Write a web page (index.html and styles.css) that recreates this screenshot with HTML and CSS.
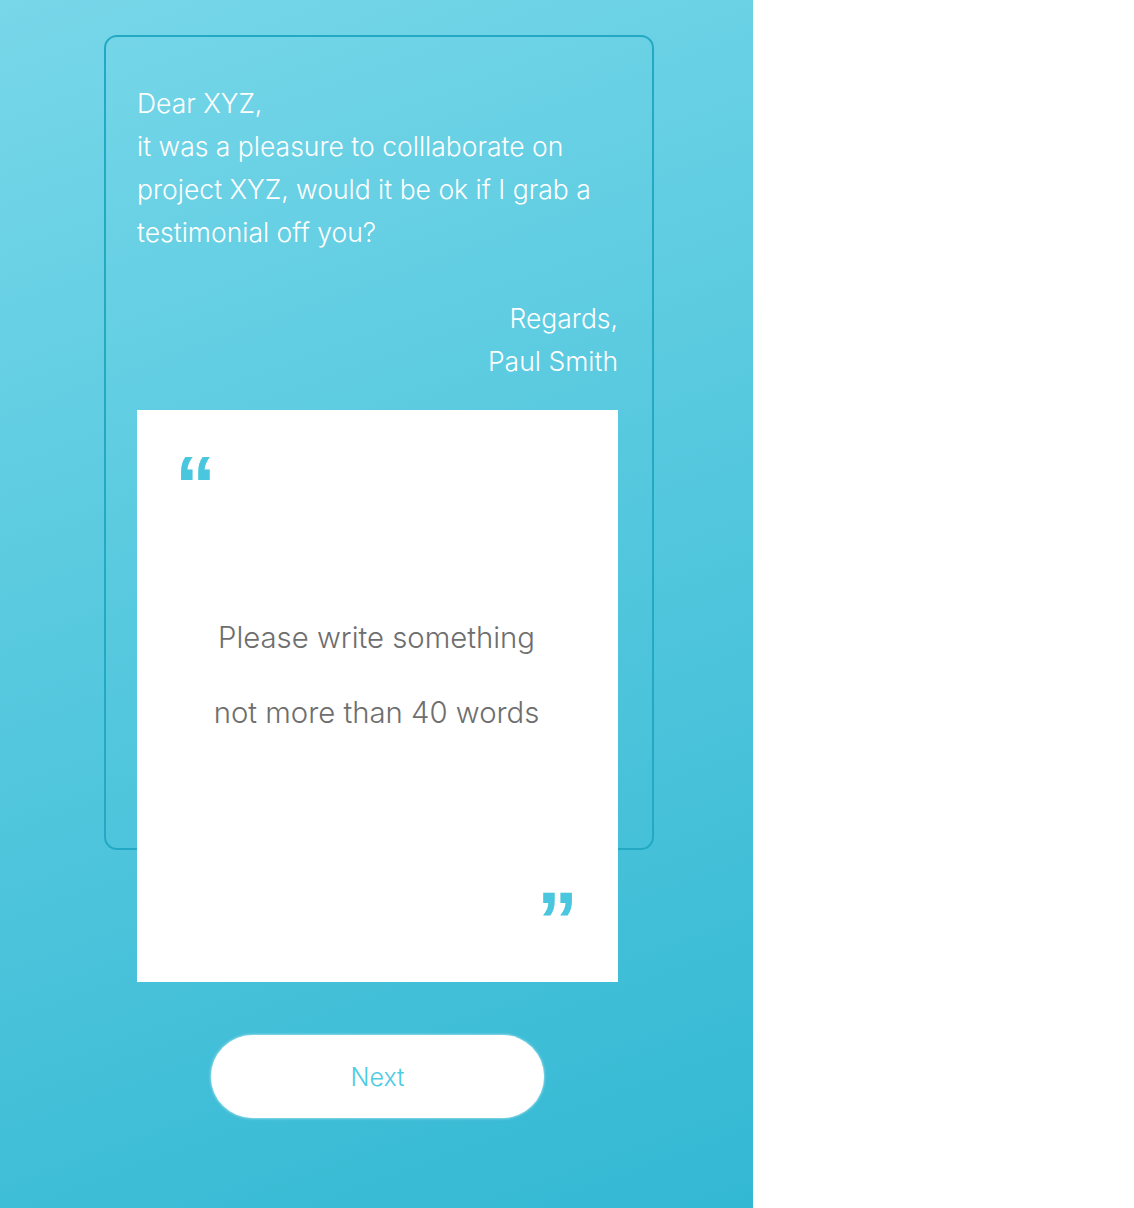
FILE: index.html
```html
<!DOCTYPE html>
<html lang="en">
<head>
<meta charset="utf-8">
<title>Testimonial request</title>
<link rel="stylesheet" href="styles.css">
</head>
<body>
<div class="page">
  <section class="panel">
    <div class="card">
      <div class="letter">
        <p class="greeting">Dear XYZ,<br>it was a pleasure to colllaborate on project XYZ, would it be ok if I grab a testimonial off you?</p>
        <p class="sign">Regards,<br>Paul Smith</p>
      </div>
      <div class="quote-box">
        <div class="q q-open">&ldquo;</div>
        <div class="prompt">
          <p>Please write something</p>
          <p>not more than 40 words</p>
        </div>
        <div class="q q-close">&rdquo;</div>
      </div>
    </div>
    <div class="actions">
      <button class="next" type="button">Next</button>
    </div>
  </section>
  <div class="blank"></div>
</div>
</body>
</html>
```

FILE: styles.css
```css
* { box-sizing: border-box; }
html, body { margin: 0; padding: 0; background: #fff; }
body { font-family: Inter, "Liberation Sans", sans-serif; }

.page { display: flex; width: 1134px; height: 1208px; }

.panel {
  width: 753px;
  height: 1208px;
  background: linear-gradient(160deg, #78d7e9 0%, #57c9df 45%, #33b8d3 100%);
  padding: 35px 0 0 104px;
  display: flex;
  flex-direction: column;
}

.card {
  width: 550px;
  height: 815px;
  border: 2px solid #24a9c5;
  border-radius: 13px;
  padding: 45px 34px 0 31px;
}

.letter { color: #fff; font-weight: 300; font-size: 26.5px; line-height: 43px; }
.letter p { margin: 0; }
.sign { text-align: right; margin-top: 43px !important; }

.quote-box {
  margin-top: 27px;
  width: 481px;
  height: 572px;
  background: #fff;
  position: relative;
  display: flex;
  flex-direction: column;
  padding: 0 40px 0 38px;
}

.q {
  font-family: "Liberation Sans", Arial, sans-serif;
  font-weight: 700;
  color: #4ac6df;
  font-size: 82px;
  line-height: 1;
  height: 50px;
}
.q-open { margin-top: 34px; }
.q-close { text-align: right; margin-bottom: 52px; height: 50px; }

.prompt {
  flex: 1;
  display: flex;
  flex-direction: column;
  justify-content: center;
  text-align: center;
  color: #6e6e6e;
  font-size: 29.3px;
  font-weight: 300;
  line-height: 75px;
  padding-bottom: 24px;
}
.prompt p { margin: 0; }

.actions { margin-top: 185px; width: 550px; display: flex; padding-left: 107px; }

.next {
  width: 333px;
  height: 83px;
  border: none;
  border-radius: 42px;
  background: #fff;
  box-shadow: 0 0 3px rgba(255, 255, 255, 0.8);
  color: #4ccbe2;
  font-family: Inter, "Liberation Sans", sans-serif;
  font-weight: 300;
  font-size: 25px;
  padding: 0;
}

.blank { flex: 1; background: #fff; }
```
